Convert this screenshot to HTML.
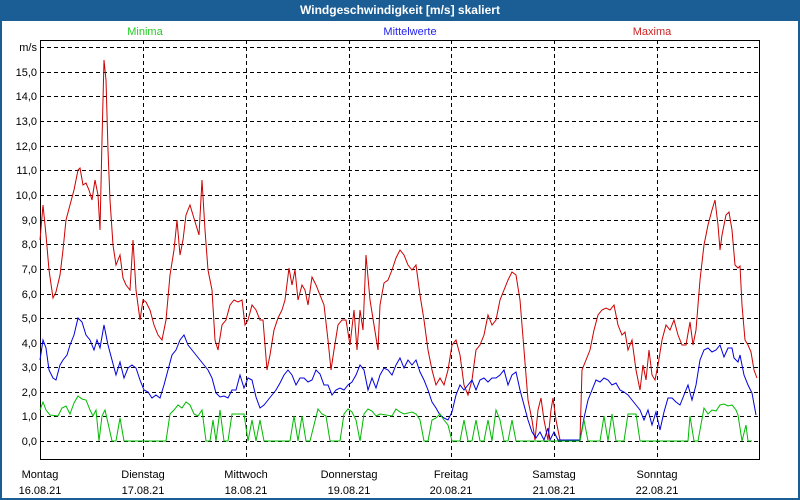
<!DOCTYPE html>
<html><head><meta charset="utf-8"><style>
html,body{margin:0;padding:0;background:#fff}
body{width:800px;height:500px;position:relative;overflow:hidden;font-family:"Liberation Sans",sans-serif}
.frame{position:absolute;left:0;top:0;width:796px;height:498px;border:2px solid #1b5e96;border-top:0}
.title{position:absolute;left:0;top:0;width:800px;height:21px;background:#1b5e96;color:#fff;font-weight:bold;font-size:12px;text-align:center;line-height:21px}
</style></head><body>
<div class="frame"></div>
<div class="title">Windgeschwindigkeit [m/s] skaliert</div>
<svg width="800" height="500" style="position:absolute;left:0;top:0" font-family="Liberation Sans, sans-serif" font-size="11">
<text x="145" y="35" fill="#22cc22" text-anchor="middle">Minima</text>
<text x="410" y="35" fill="#2222ee" text-anchor="middle">Mittelwerte</text>
<text x="652" y="35" fill="#cc2222" text-anchor="middle">Maxima</text>
<g stroke="#000" stroke-dasharray="4,3" stroke-width="1">
<line x1="40" x2="760" y1="47.5" y2="47.5"/>
<line x1="40" x2="760" y1="72.5" y2="72.5"/><line x1="40" x2="760" y1="96.5" y2="96.5"/><line x1="40" x2="760" y1="121.5" y2="121.5"/><line x1="40" x2="760" y1="146.5" y2="146.5"/><line x1="40" x2="760" y1="170.5" y2="170.5"/><line x1="40" x2="760" y1="195.5" y2="195.5"/><line x1="40" x2="760" y1="220.5" y2="220.5"/><line x1="40" x2="760" y1="244.5" y2="244.5"/><line x1="40" x2="760" y1="269.5" y2="269.5"/><line x1="40" x2="760" y1="294.5" y2="294.5"/><line x1="40" x2="760" y1="318.5" y2="318.5"/><line x1="40" x2="760" y1="343.5" y2="343.5"/><line x1="40" x2="760" y1="367.5" y2="367.5"/><line x1="40" x2="760" y1="392.5" y2="392.5"/><line x1="40" x2="760" y1="416.5" y2="416.5"/><line x1="40" x2="760" y1="441.5" y2="441.5"/>
<line y1="40" y2="460" x1="143.5" x2="143.5"/><line y1="40" y2="460" x1="246.5" x2="246.5"/><line y1="40" y2="460" x1="349.5" x2="349.5"/><line y1="40" y2="460" x1="451.5" x2="451.5"/><line y1="40" y2="460" x1="554.5" x2="554.5"/><line y1="40" y2="460" x1="657.5" x2="657.5"/>
</g>
<rect x="40.5" y="40.5" width="719" height="419" fill="none" stroke="#000"/>
<g text-anchor="end" fill="#000">
<text x="37" y="51">m/s</text><text x="37" y="76">15,0</text><text x="37" y="100">14,0</text><text x="37" y="125">13,0</text><text x="37" y="150">12,0</text><text x="37" y="174">11,0</text><text x="37" y="199">10,0</text><text x="37" y="224">9,0</text><text x="37" y="248">8,0</text><text x="37" y="273">7,0</text><text x="37" y="298">6,0</text><text x="37" y="322">5,0</text><text x="37" y="347">4,0</text><text x="37" y="371">3,0</text><text x="37" y="396">2,0</text><text x="37" y="420">1,0</text><text x="37" y="445">0,0</text>
</g>
<g text-anchor="middle" fill="#000">
<text x="40" y="478">Montag</text><text x="40" y="494">16.08.21</text>
<text x="143" y="478">Dienstag</text><text x="143" y="494">17.08.21</text>
<text x="246" y="478">Mittwoch</text><text x="246" y="494">18.08.21</text>
<text x="349" y="478">Donnerstag</text><text x="349" y="494">19.08.21</text>
<text x="451" y="478">Freitag</text><text x="451" y="494">20.08.21</text>
<text x="554" y="478">Samstag</text><text x="554" y="494">21.08.21</text>
<text x="657" y="478">Sonntag</text><text x="657" y="494">22.08.21</text>
</g>
<polyline fill="none" stroke="#cc0000" stroke-width="1" points="40,240 43,205 46,235 49,270 53,298 56,292 60,275 63,250 66,220 70,205 74,190 78,170 80,168 83,185 86,183 89,190 92,200 95,180 98,195 100,230 102,140 104,60 106,80 108,150 110,200 113,245 116,265 120,255 123,278 126,285 130,290 133,240 136,290 140,320 143,300 146,302 150,310 154,325 158,335 162,340 166,320 170,275 174,250 177,220 180,255 183,240 186,215 190,205 193,215 196,225 199,235 202,180 205,230 208,270 212,290 215,340 218,350 222,325 226,320 230,305 234,300 238,302 242,300 245,325 248,320 252,305 256,310 260,320 263,320 267,370 270,355 274,330 278,318 282,310 285,300 289,268 292,285 295,270 298,300 302,285 305,290 308,305 312,277 316,285 320,295 324,305 328,340 331,370 334,350 338,325 342,320 346,320 350,345 354,310 357,350 360,310 363,330 366,255 370,300 374,325 378,350 380,305 384,283 388,280 392,270 396,258 400,250 404,255 408,265 412,270 416,265 420,295 424,320 428,350 432,370 436,385 440,378 444,385 448,370 452,345 456,340 460,355 464,385 468,395 472,380 476,350 480,345 484,335 488,315 492,325 496,320 500,300 504,290 508,280 512,272 516,275 520,300 524,350 528,400 532,420 535,440 538,410 541,398 544,420 548,440 551,410 553,398 556,420 560,440 580,440 582,370 586,360 590,350 594,330 598,315 602,310 606,308 610,310 614,305 618,325 622,335 625,332 628,350 632,340 636,370 640,390 643,365 646,380 649,350 652,375 655,380 658,365 662,340 666,325 670,330 674,320 678,335 682,345 686,345 690,322 693,345 696,330 700,280 704,245 708,225 712,210 715,200 718,225 720,250 722,235 726,215 729,212 732,230 735,265 738,268 740,266 742,305 745,340 748,345 751,352 754,370 757,378"/>
<polyline fill="none" stroke="#0000dd" stroke-width="1" points="40,360 43,340 46,348 49,370 53,378 56,380 60,365 63,360 67,355 70,345 74,335 78,318 82,322 86,335 90,340 94,350 97,340 100,348 104,325 108,345 112,360 116,375 120,362 124,378 128,368 132,365 136,368 140,380 144,390 148,392 152,398 156,395 160,398 164,385 168,370 172,355 176,350 180,340 184,335 188,345 192,350 196,355 200,360 204,365 208,370 212,378 216,393 220,397 224,396 228,398 232,390 236,390 240,375 244,388 248,378 252,380 256,397 260,408 264,405 268,400 272,395 276,390 280,383 284,375 288,370 292,375 296,385 300,378 304,378 308,382 312,380 316,370 320,374 324,385 328,385 332,395 336,390 340,388 344,390 348,385 352,382 356,375 360,365 364,370 368,390 372,378 376,388 380,375 384,368 388,370 392,375 396,365 400,358 404,368 408,360 412,365 416,360 420,372 424,380 428,390 432,402 436,408 440,415 444,418 448,420 452,412 456,395 460,385 464,390 468,385 472,380 476,390 480,380 484,378 488,382 492,378 496,378 500,375 504,370 508,385 512,375 516,372 520,390 524,405 528,420 532,432 536,438 540,432 544,440 548,428 550,440 554,432 558,440 580,440 584,418 588,400 592,390 596,380 600,382 604,378 608,380 612,385 616,383 620,390 624,392 628,395 632,400 636,405 640,410 644,420 648,410 652,425 656,412 660,430 664,412 668,398 672,398 676,402 680,405 684,395 688,385 692,400 696,385 700,360 704,350 708,348 712,352 716,350 720,345 724,357 728,348 732,348 734,358 738,362 740,355 744,375 748,385 752,393 756,415"/>
<polyline fill="none" stroke="#00bb00" stroke-width="1" points="40,410 43,402 46,410 50,415 58,416 62,408 66,406 70,414 74,403 78,396 82,399 86,400 90,410 93,416 96,410 99,441 102,416 105,410 108,423 112,441 116,441 120,418 124,441 166,441 170,414 174,410 178,405 182,408 186,402 190,405 194,414 198,416 202,410 206,441 210,441 213,420 216,441 220,410 224,441 228,441 232,414 244,414 248,441 252,420 256,441 260,420 264,441 290,441 294,416 298,441 302,416 306,441 310,441 314,425 318,409 322,414 326,416 330,441 340,441 344,414 348,409 352,412 356,420 360,441 364,414 368,409 372,411 376,416 380,414 392,416 396,409 400,412 404,414 412,412 416,414 420,420 424,441 428,441 432,420 436,418 440,414 444,420 448,425 452,441 460,441 464,420 468,441 472,441 476,420 480,441 484,441 488,420 492,441 496,410 500,420 504,441 508,441 512,420 516,441 580,441 584,420 588,441 600,441 604,416 608,441 612,414 616,441 624,441 628,414 636,414 640,441 688,441 690,416 694,441 698,441 704,408 708,414 712,410 716,411 720,405 724,404 728,406 732,405 736,410 738,415 742,441 746,425 748,441 752,441"/>
</svg>
</body></html>
